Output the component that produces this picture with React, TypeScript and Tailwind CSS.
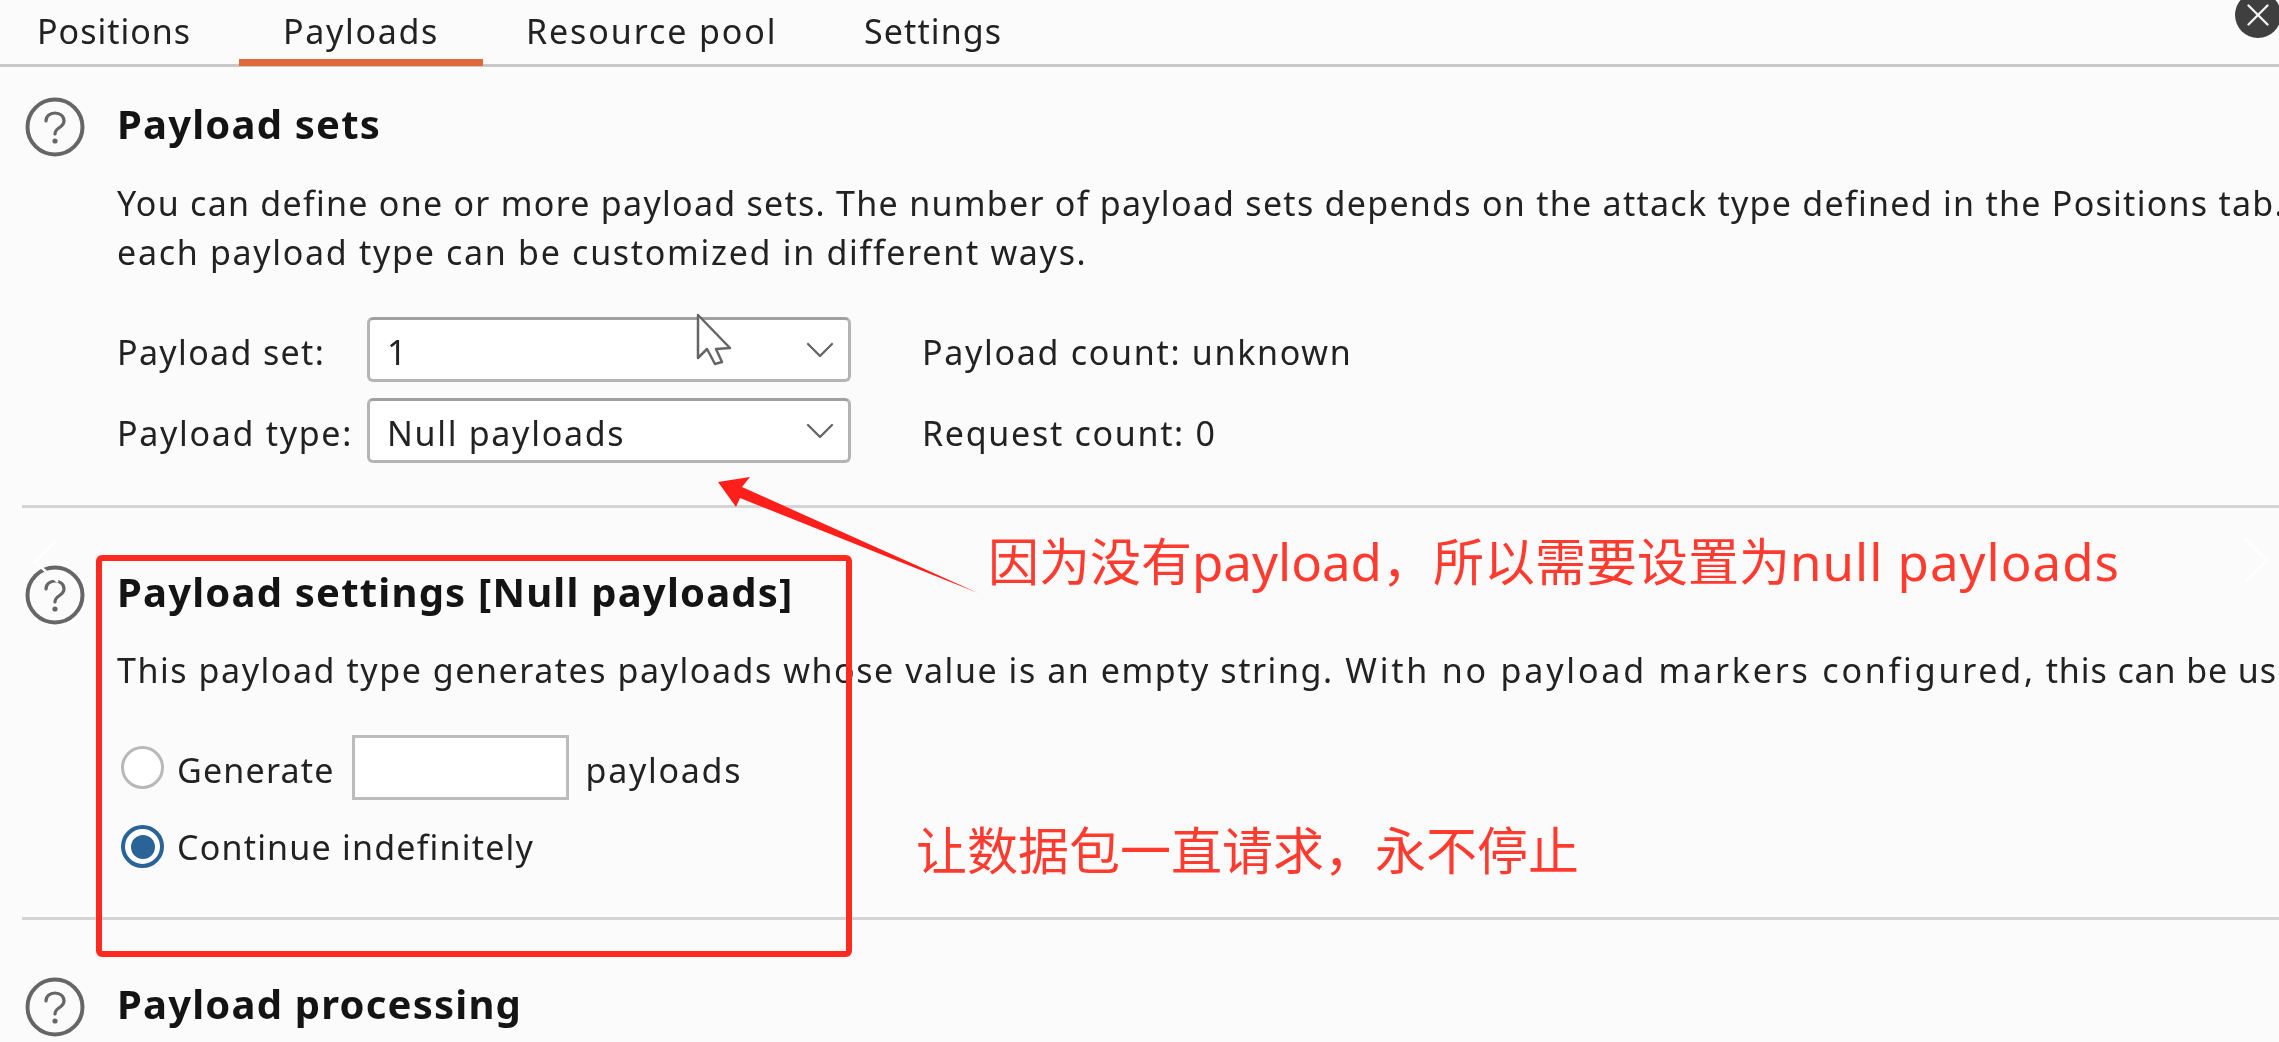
import React from 'react';
import { ChevronDown, X } from 'lucide-react';

const HelpIcon = () => (
    <svg viewBox="0 0 60 60" className="h-[60px] w-[60px] shrink-0" fill="none">
        <circle cx="30" cy="30" r="27.500" stroke="#666" strokeWidth="4" />
        <path d="M21 24c0-5 4-8 9-8s9 3 9 8c0 7-9 6-9 13" stroke="#666" strokeWidth="3.200" strokeLinecap="round" />
        <circle cx="30" cy="44" r="2.600" fill="#666" />
    </svg>
);

const Section = ({ title, className, children }: { title: string; className?: string; children?: React.ReactNode }) => (
    <section className={className}>
        <div className="flex items-center gap-[32px] pl-[25px]">
            <HelpIcon />
            <h2 className="pb-[6px] text-[40px] font-bold leading-[44px] tracking-[1.2px] text-[#141414]">{title}</h2>
        </div>
        {children}
    </section>
);

const Dropdown = ({ value }: { value: string }) => (
    <div className="flex h-[65px] w-[484px] items-center justify-between rounded-[6px] border-[3px] border-[#b4b4b4] border-t-[#a0a0a0] bg-white pl-[17px] pr-[4px]">
        <span className="pt-[5px]">{value}</span>
        <ChevronDown className="h-[48px] w-[48px] text-[#666]" strokeWidth={1.2} />
    </div>
);

const Radio = ({ checked }: { checked?: boolean }) =>
    checked ? (
        <span className="flex h-[43px] w-[43px] items-center justify-center rounded-full border-[4px] border-[#2a6496] bg-white">
            <span className="h-[24px] w-[24px] rounded-full bg-[#2a6496]" />
        </span>
    ) : (
        <span className="h-[43px] w-[43px] rounded-full border-[3px] border-[#b8b8b8] bg-white" />
    );

export default function App() {
    return (
        <div className="relative h-[1042px] w-[2279px] overflow-hidden bg-[#fbfbfb] font-['Noto_Sans','Noto_Sans_CJK_SC',sans-serif] text-[34px] leading-[49px] tracking-[1.7px] text-[#222222] blur-[0.6px]">
            <nav className="flex h-[67px] items-end border-b-[3px] border-[#c8c8c8] pl-[37px]">
                <span className="w-[202px] pb-[8px] tracking-[1px]">Positions</span>
                <span className="-mb-[2px] w-[244px] border-b-[7px] border-[#e0693a] pb-[3px] text-center">Payloads</span>
                <span className="ml-[43px] w-[338px] pb-[8px] tracking-[1.9px]">Resource pool</span>
                <span className="pb-[8px] tracking-[1.1px]">Settings</span>
            </nav>

            <Section title="Payload sets" className="pt-[30px]">
                <div className="mt-[22px] whitespace-nowrap pl-[117px]">
                    <p className="tracking-[1.27px]">You can define one or more payload sets. The number of payload sets depends on the attack type defined in the Positions tab. Payload types are available for each payload set, and</p>
                    <p>each payload type can be customized in different ways.</p>
                </div>
                <div className="mt-[40px] flex flex-col gap-[16px] pl-[117px]">
                    <div className="flex items-center">
                        <span className="w-[250px] pt-[5px] tracking-[1.35px]">Payload set:</span>
                        <Dropdown value="1" />
                        <span className="ml-[71px] pt-[5px]">Payload count: unknown</span>
                    </div>
                    <div className="flex items-center">
                        <span className="w-[250px] pt-[5px]">Payload type:</span>
                        <Dropdown value="Null payloads" />
                        <span className="ml-[71px] pt-[5px]">Request count: 0</span>
                    </div>
                </div>
            </Section>

            <div className="ml-[22px] mt-[42px] h-[3px] bg-[#d4d4d4]" />

            <Section title="Payload settings [Null payloads]" className="pt-[57px]">
                <p className="mt-[21px] whitespace-nowrap pl-[117px] tracking-[1.55px]">
                    This payload type generates payloads whose value is an empty string.
                    <span className="tracking-[2.8px]"> With no payload markers configured,</span>
                    <span className="tracking-[0.9px]"> this can be used to repeatedly issue the base request</span>
                </p>
                <div className="mt-[40px] flex items-center gap-[13px] pl-[121px]">
                    <Radio />
                    <span className="pt-[5px] tracking-[1.2px]">Generate</span>
                    <span className="ml-[4px] h-[65px] w-[217px] border-[3px] border-[#bcbcbc] bg-white" />
                    <span className="ml-[4px] pt-[5px]">payloads</span>
                </div>
                <div className="mt-[21px] flex items-center gap-[13px] pl-[121px]">
                    <Radio checked />
                    <span className="pt-[2px] tracking-[1.2px]">Continue indefinitely</span>
                </div>
            </Section>

            <div className="ml-[22px] mt-[45px] h-[3px] bg-[#d4d4d4]" />

            <Section title="Payload processing" className="pt-[57px]" />

            {/* annotations drawn over the page */}
            <div className="absolute left-[2235px] top-[-8px] flex h-[46px] w-[46px] items-center justify-center rounded-full bg-[#3f3f3f]">
                <X className="h-[38px] w-[38px] text-[#f4f4f4]" strokeWidth={1.5} />
            </div>
            <div className="absolute left-[96px] top-[555px] h-[402px] w-[756px] rounded-[6px] border-[6px] border-[#ff2a1f]" />
            <svg className="absolute left-[700px] top-[460px] h-[150px] w-[300px]" viewBox="0 0 300 150">
                <path d="M18 22 L50 17 L42 27 L278 133 L40 38 L36 47 Z" fill="#ff1f1a" />
            </svg>
            <svg className="absolute left-[695px] top-[312px] h-[56px] w-[40px]" viewBox="0 0 40 56" fill="#fff" stroke="#666" strokeWidth="2.500" strokeLinejoin="round">
                <path d="M3 3 V46 L12 37 L20 52 L27 50 L21 37 L35 36 Z" />
            </svg>
            <svg className="absolute left-[30px] top-[535px] h-[52px] w-[34px]" viewBox="0 0 34 52" fill="none" stroke="#fff" strokeWidth="2.500">
                <path d="M27 5 L5 27 L28 47" />
            </svg>
            <svg className="absolute left-[2240px] top-[535px] h-[52px] w-[34px]" viewBox="0 0 34 52" fill="none" stroke="#fff" strokeWidth="3">
                <path d="M5 4 L27 25 L5 47" />
            </svg>
            <span className="absolute left-[988px] top-[526px] whitespace-nowrap text-[51px] leading-[70px] tracking-normal text-[#ff3b30]">
                因为没有payload，所以需要设置为<span className="tracking-[1px]">null payloads</span>
            </span>
            <span className="absolute left-[916px] top-[815px] whitespace-nowrap text-[51px] leading-[70px] tracking-normal text-[#ff3b30]">让数据包一直请求，永不停止</span>
        </div>
    );
}
